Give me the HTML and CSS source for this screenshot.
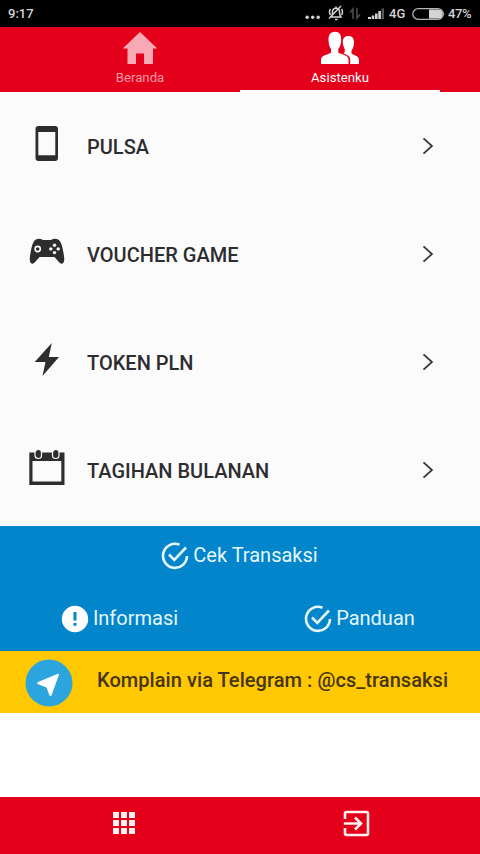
FILE: index.html
```html
<!DOCTYPE html>
<html lang="id">
<head>
<meta charset="utf-8">
<meta name="viewport" content="width=device-width">
<title>Asistenku</title>
<link rel="stylesheet" href="styles.css">
</head>
<body>
<div class="app">
  <div class="status">
    <span class="time">9:17</span>
    <svg class="dots" width="16" height="20" viewBox="0 0 16 20"><circle cx="2.2" cy="10.2" r="1.7"/><circle cx="7.7" cy="10.2" r="1.7"/><circle cx="13.2" cy="10.2" r="1.7"/></svg>
    <svg class="bell" width="17" height="20" viewBox="0 0 17 20"><path d="M4.500 13 Q5.500 11 5.500 8 Q5.500 4.200 9 4.200 Q12.500 4.200 12.500 8 Q12.500 11 14 13 Z M9 4V2.500 M8 15.500H10.500 M3.500 5Q1.500 8 3.500 11 M14.500 5Q16.500 8 14.500 11 M2 14.500L14 2"/></svg>
    <svg class="data" width="12" height="20" viewBox="0 0 12 20"><path d="M4 15V5L1 8.500 M8 4V14L11 10.500"/></svg>
    <svg class="signal" width="17" height="20" viewBox="0 0 17 20"><path d="M0 15V13H3V15Z M3.700 15V11.500H6.300V15Z M7 15V9.500H9.600V15Z M10.300 15V7H12.900V15Z"/><path class="dim" d="M13.600 15V4.500H16V15Z"/></svg>
    <span class="net">4G</span>
    <svg class="battery" width="33" height="20" viewBox="0 0 33 20"><rect class="shell" x=".8" y="4.600" width="30.400" height="10.800" rx="5.400"/><path d="M17 5.500H26Q30.500 5.500 30.500 10T26 14.500H17Z"/><path d="M31.500 8Q33 10 31.500 12Z"/></svg>
    <span class="percent">47%</span>
  </div>

  <nav class="tabs">
    <a class="tab">
      <svg width="36" height="34" viewBox="0 0 36 34"><path d="M18 1L35.300 17.500H31V33H22V22.500H14V33H5.500V17.500H.7Z"/></svg>
      <span>Beranda</span>
    </a>
    <a class="tab active">
      <svg width="40" height="34" viewBox="0 0 40 34"><path d="M15 .8C19.500 .8 21.200 3.800 21.200 8.500C21.200 13 20 16 18.300 18V21.500C19 23 28.500 23.500 28.500 28.500V33H1V28.500C1 24 9.500 23.500 11 21.500V18C9.500 16 8.500 13 8.500 8.500C8.500 3.800 10.500 .8 15 .8Z"/><path d="M24.800 20V18.500C23.400 15.500 22.700 13 22.800 10.500C22.900 7 25 5 28.500 5C32.500 5 34 7.500 34 11.500C34 15 33 17.500 31.500 19.500V22.500C32.500 24 39 24.500 39 29V33H30.200V28.500C30.200 25 26.500 23.500 23.500 22.500Q24.800 21.500 24.800 20Z"/></svg>
      <span>Asistenku</span>
    </a>
  </nav>

  <main class="list">
    <a class="row">
      <svg class="icon" width="36" height="40" viewBox="0 0 36 40"><path fill-rule="evenodd" d="M9.500 2H26Q29 2 29 5V34Q29 37 26 37H9.500Q6.500 37 6.500 34V5Q6.500 2 9.500 2ZM9.300 8V31.300H26.300V8Z"/></svg>
      <span class="label">PULSA</span>
      <svg class="chevron" width="12" height="18" viewBox="0 0 12 18"><path d="M1.500 1.300L10 9L1.500 16.700"/></svg>
    </a>
    <a class="row">
      <svg class="icon" width="36" height="40" viewBox="0 0 36 40"><path d="M6 8Q9 6.300 12 7L14 8H22L24 7Q27 6.300 30 8Q33 11 34.500 21Q36.500 31 33 31.800Q31.500 32.300 29 29L25.500 25H10.500L7 29Q4.500 32.300 3 31.800Q-.5 31 1.500 21Q3 11 6 8Z"/><circle class="ring" cx="8.700" cy="17" r="2.600"/><g class="cut"><circle cx="25.500" cy="13.200" r="1.700"/><circle cx="25.500" cy="20.600" r="1.700"/><circle cx="21.800" cy="16.900" r="1.700"/><circle cx="29.200" cy="16.900" r="1.700"/></g></svg>
      <span class="label">VOUCHER GAME</span>
      <svg class="chevron" width="12" height="18" viewBox="0 0 12 18"><path d="M1.500 1.300L10 9L1.500 16.700"/></svg>
    </a>
    <a class="row">
      <svg class="icon" width="36" height="40" viewBox="0 0 36 40"><path d="M22.800 3L19.800 17H30L13.500 36L16.500 22H5.700Z"/></svg>
      <span class="label">TOKEN PLN</span>
      <svg class="chevron" width="12" height="18" viewBox="0 0 12 18"><path d="M1.500 1.300L10 9L1.500 16.700"/></svg>
    </a>
    <a class="row">
      <svg class="icon" width="36" height="40" viewBox="0 0 36 40"><path fill-rule="evenodd" d="M.3 4.500H35.500V37H.3ZM3.500 13V33.600H32.300V13Z"/><g class="clips"><rect x="6" y="1.500" width="6.500" height="9" rx="3.250"/><rect x="23.500" y="1.500" width="6.500" height="9" rx="3.250"/></g></svg>
      <span class="label">TAGIHAN BULANAN</span>
      <svg class="chevron" width="12" height="18" viewBox="0 0 12 18"><path d="M1.500 1.300L10 9L1.500 16.700"/></svg>
    </a>
  </main>

  <section class="actions">
    <a class="action wide">
      <svg class="check" width="28" height="28" viewBox="0 0 28 28"><path d="M18.500 2.700A12 12 0 1 0 26 14M8 12.500L13.300 17.800L25 5.500"/></svg>
      <span>Cek Transaksi</span>
    </a>
    <a class="action">
      <svg width="28" height="28" viewBox="0 0 28 28"><circle cx="14" cy="14" r="13.200"/><path class="mark" d="M12.500 7H15.500V15.500H12.500ZM12.500 18H15.500V20.800H12.500Z"/></svg>
      <span>Informasi</span>
    </a>
    <a class="action">
      <svg class="check" width="28" height="28" viewBox="0 0 28 28"><path d="M18.500 2.700A12 12 0 1 0 26 14M8 12.500L13.300 17.800L25 5.500"/></svg>
      <span>Panduan</span>
    </a>
  </section>

  <a class="telegram">
    <svg width="48" height="48" viewBox="0 0 48 48"><circle cx="24" cy="24" r="23.500"/><path d="M34 15.500L26.500 36.500Q25.500 38 24.500 36.500L21.500 28.500L12.500 25Q11.500 23.800 13 23L33 14.800Q34.400 14.500 34 15.500Z"/></svg>
    <span>Komplain via Telegram : @cs_transaksi</span>
  </a>

  <footer class="bottom">
    <svg width="22" height="22" viewBox="0 0 22 22"><path d="M0 0H6V6H0ZM8 0H14V6H8ZM16 0H22V6H16ZM0 8H6V14H0ZM8 8H14V14H8ZM16 8H22V14H16ZM0 16H6V22H0ZM8 16H14V22H8ZM16 16H22V22H16Z"/></svg>
    <svg class="exit" width="27" height="27" viewBox="0 0 27 27"><path d="M2 9V3.500Q2 2 3.500 2H23.500Q25 2 25 3.500V23.500Q25 25 23.500 25H3.500Q2 25 2 23.500V18M.8 13.500H17.500M12 7.500L18 13.500L12 19.500"/></svg>
  </footer>
</div>
</body>
</html>
```
FILE: styles.css
```css
* { box-sizing: border-box; }
body { margin: 0; font-family: Roboto, sans-serif; }
svg { display: block; flex: none; }

.app {
  width: 480px;
  height: 854px;
  display: flex;
  flex-direction: column;
  background: #fff;
}

.status {
  height: 27px;
  display: flex;
  align-items: center;
  padding: 0 8px;
  background: #000;
  color: #d4d4d4;
  fill: #d4d4d4;
  font-size: 13px;
  font-weight: 500;
}
.time { flex: 1; }
.dots { margin-top: 7px; margin-right: 6px; }
.bell { margin-right: 5px; fill: none; stroke: #d4d4d4; stroke-width: 1.5; }
.data { margin-right: 7px; fill: none; stroke: #4c4c4c; stroke-width: 1.6; }
.signal { margin-right: 4px; }
.dim { fill: #555; }
.net { width: 16px; margin-right: 7px; }
.battery { margin-right: 3px; }
.shell { fill: none; stroke: #b5b5b5; stroke-width: 1.3; }
.percent { width: 24px; letter-spacing: -0.4px; }

.tabs {
  height: 65px;
  display: flex;
  padding-left: 40px;
  background: #e4001b;
}
.tab {
  width: 200px;
  padding-top: 4px;
  display: flex;
  flex-direction: column;
  align-items: center;
  gap: 4px;
  font-size: 13.2px;
  line-height: 17px;
  color: #f79aa5;
  fill: #f9a9b4;
}
.tab.active {
  color: #fff;
  fill: #fff;
  border-bottom: 2px solid #fff;
}

.list {
  height: 434px;
  background: #fbfbfb;
}
.row {
  height: 108px;
  display: flex;
  align-items: center;
  padding: 0 46px 0 29px;
  color: #2d2d2f;
  fill: #2d2d2f;
}
.icon { margin-top: -4px; }
.label {
  flex: 1;
  margin: 2px 0 0 22px;
  font-size: 20px;
  font-weight: 500;
}
.chevron { fill: none; stroke: #333; stroke-width: 1.7; }
.ring { fill: none; stroke: #fbfbfb; stroke-width: 1.6; }
.cut { fill: #fbfbfb; }
.clips { stroke: #fbfbfb; stroke-width: 1.2; }

.actions {
  height: 125px;
  display: grid;
  grid-template-columns: 1fr 1fr;
  grid-template-rows: 60px 65px;
  background: #0285cb;
  color: #e6f7ff;
  fill: #fff;
  font-size: 20px;
}
.action {
  display: flex;
  align-items: center;
  justify-content: center;
  gap: 4px;
  padding-right: 1px;
}
.action span { margin-top: -2px; }
.wide { grid-column: 1 / 3; }
.wide span { margin-top: -3px; }
.check { fill: none; stroke: #e6f7ff; stroke-width: 2.6; }
.mark { fill: #0285cb; }

.telegram {
  height: 62px;
  display: flex;
  align-items: center;
  gap: 24px;
  padding: 2px 0 0 25px;
  background: #ffc800;
  color: #453516;
  fill: #2ca5df;
  font-size: 20px;
  font-weight: 500;
  letter-spacing: 0.06px;
  white-space: nowrap;
}
.telegram path { fill: #fff; }
.telegram span { margin-top: -6px; }

.bottom {
  height: 57px;
  margin-top: auto;
  display: flex;
  align-items: center;
  padding: 0 110px 5px 113px;
  justify-content: space-between;
  background: #e4001b;
  fill: #fff0f0;
}
.exit { fill: none; stroke: #fff0f0; stroke-width: 2.6; }
```
